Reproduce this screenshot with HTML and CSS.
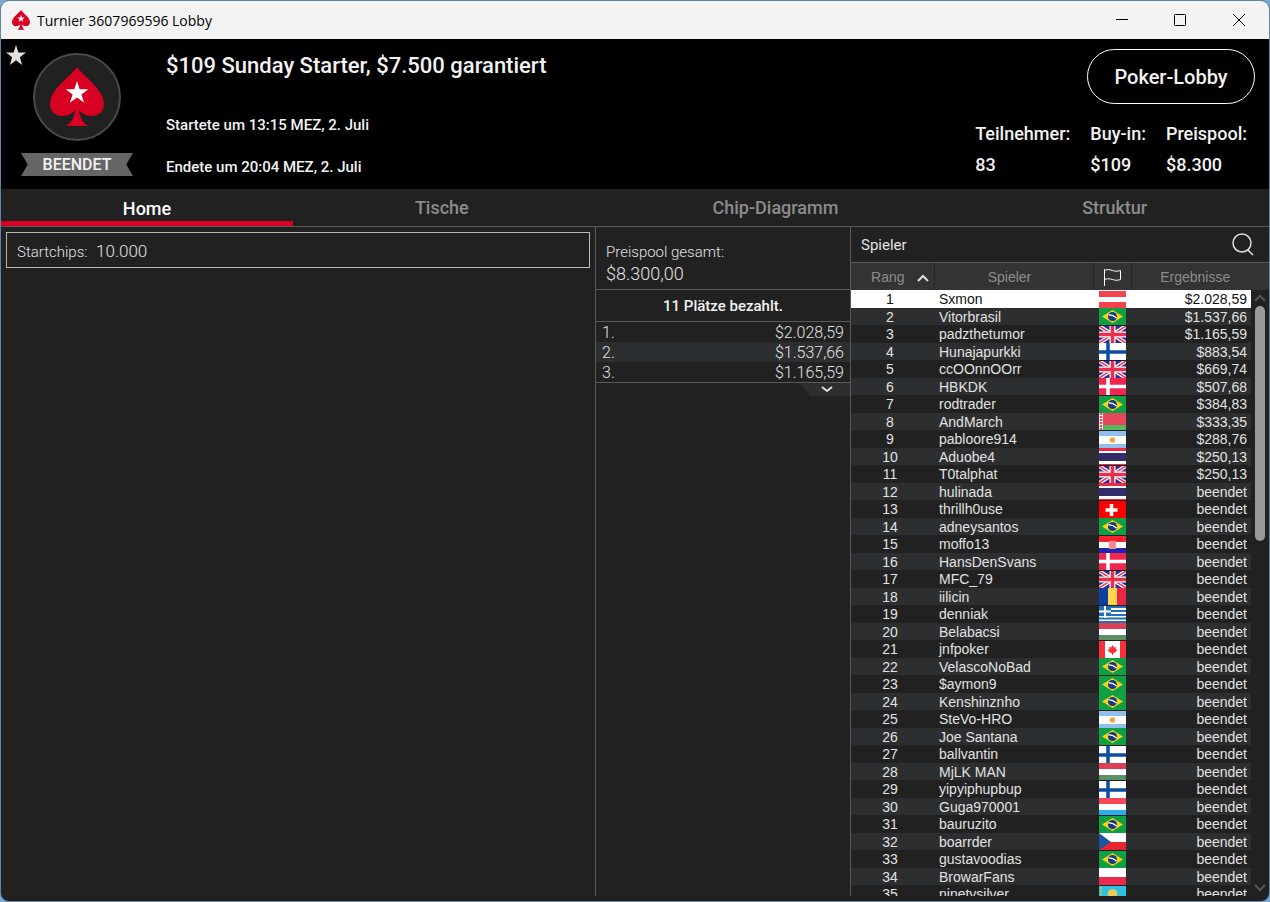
FILE: index.html
```html
<!DOCTYPE html>
<html lang="de">
  <head>
    <meta charset="UTF-8" />
    <meta name="viewport" content="width=device-width, initial-scale=1.0" />
    <title>Turnier 3607969596 Lobby</title>
    <link rel="stylesheet" href="styles.css">
  </head>
  <body>
    <svg class="defs" aria-hidden="true">
      <symbol id="spade" viewBox="0 0 54 60">
        <path fill="#d70022" d="M27 0C33 9 54 22 54 37c0 7-5 12-12 12-5 0-10-2-13-6 1 8 4 13 9 16H16c5-3 8-8 9-16-3 4-8 6-13 6C5 49 0 44 0 37 0 22 21 9 27 0z"/>
        <path fill="#fff" d="M27 14l2.700 8.300h8.700l-7 5.100 2.700 8.300-7.100-5.100-7.100 5.100 2.700-8.300-7-5.100h8.700z"/>
      </symbol>
      <symbol id="flag-at" viewBox="0 0 27 17"><path fill="#fff" d="M0 0h27v17H0z"/><path fill="#f4454f" d="M0 0h27v6H0zM0 11h27v6H0z"/></symbol>
      <symbol id="flag-br" viewBox="0 0 27 17"><path fill="#0fa045" d="M0 0h27v17H0z"/><path fill="#fbd116" d="M3 8.500L13.500 2 24 8.500 13.500 15z"/><circle cx="13.500" cy="8.500" r="4.500" fill="#123a8c"/><path d="M9.500 7q4-.5 8 3" stroke="#fff" stroke-width="1.300" fill="none"/></symbol>
      <symbol id="flag-gb" viewBox="0 0 27 17"><path fill="#2b2f9e" d="M0 0h27v17H0z"/><path d="M0 0l27 17M27 0L0 17" stroke="#fff" stroke-width="4"/><path d="M0 0l27 17M27 0L0 17" stroke="#ee3a56" stroke-width="1.500"/><path d="M13.500 0v17M0 8.500h27" stroke="#fff" stroke-width="6"/><path d="M13.500 0v17M0 8.500h27" stroke="#e8304a" stroke-width="3.500"/></symbol>
      <symbol id="flag-fi" viewBox="0 0 27 17"><path fill="#fff" d="M0 0h27v17H0z"/><path d="M9 0v17M0 9h27" stroke="#0b4da2" stroke-width="3.500"/></symbol>
      <symbol id="flag-dk" viewBox="0 0 27 17"><path fill="#f0284e" d="M0 0h27v17H0z"/><path d="M9 0v17M0 8.500h27" stroke="#fff" stroke-width="3.500"/></symbol>
      <symbol id="flag-by" viewBox="0 0 27 17"><path fill="#e8465a" d="M0 0h27v12H0z"/><path fill="#5cb860" d="M0 12h27v5H0z"/><path fill="#fff" d="M0 0h4v17H0z"/><path d="M2 0v17" stroke="#e8465a" stroke-width="2.500" stroke-dasharray="2 1"/></symbol>
      <symbol id="flag-ar" viewBox="0 0 27 17"><path fill="#fff" d="M0 0h27v17H0z"/><path fill="#8fc0ec" d="M0 0h27v5H0zM0 13h27v4H0z"/><circle cx="13.500" cy="9" r="2.700" fill="#f2a540"/></symbol>
      <symbol id="flag-th" viewBox="0 0 27 17"><path fill="#fff" d="M0 0h27v17H0z"/><path fill="#f02840" d="M0 0h27v3H0zM0 16h27v1H0z"/><path fill="#322c6b" d="M0 5h27v8H0z"/></symbol>
      <symbol id="flag-ch" viewBox="0 0 27 17"><path fill="#fe0000" d="M0 0h27v17H0z"/><path d="M12.500 3v12M6.500 9h12" stroke="#fff" stroke-width="3.500"/></symbol>
      <symbol id="flag-hr" viewBox="0 0 27 17"><path fill="#fff" d="M0 0h27v17H0z"/><path fill="#ff2030" d="M0 0h27v6H0z"/><path fill="#1f25b0" d="M0 12h27v5H0z"/><path fill="#f98a94" d="M10 5h7v8h-7z"/></symbol>
      <symbol id="flag-ro" viewBox="0 0 27 17"><path fill="#0c3f9e" d="M0 0h9v17H0z"/><path fill="#ffd54f" d="M9 0h9v17H9z"/><path fill="#ec2445" d="M18 0h9v17h-9z"/></symbol>
      <symbol id="flag-gr" viewBox="0 0 27 17"><path fill="#fff" d="M0 0h27v17H0z"/><path d="M0 1h27M0 5h27M0 9h27M0 12.500h27M0 16h27" stroke="#2270b8" stroke-width="2"/><path fill="#2270b8" d="M0 0h12v10H0z"/><path d="M6 0v12M0 5.500h12" stroke="#fff" stroke-width="2"/></symbol>
      <symbol id="flag-hu" viewBox="0 0 27 17"><path fill="#fff" d="M0 0h27v17H0z"/><path fill="#dc4055" d="M0 0h27v6H0z"/><path fill="#5c9068" d="M0 12h27v5H0z"/></symbol>
      <symbol id="flag-ca" viewBox="0 0 27 17"><path fill="#fff" d="M0 0h27v17H0z"/><path fill="#f9303a" d="M0 0h6v17H0zM21 0h6v17h-6zM13.500 4l1.500 2.500 2-.5-.5 2 2 1-3 3h-1.500v2h-1v-2h-1.500l-3-3 2-1-.5-2 2 .5z"/></symbol>
      <symbol id="flag-lu" viewBox="0 0 27 17"><path fill="#fff" d="M0 0h27v17H0z"/><path fill="#f84858" d="M0 0h27v6H0z"/><path fill="#27b0ec" d="M0 12h27v5H0z"/></symbol>
      <symbol id="flag-cz" viewBox="0 0 27 17"><path fill="#fff" d="M0 0h27v17H0z"/><path fill="#e8242c" d="M0 9h27v8H0z"/><path fill="#17579f" d="M0 0l12 9-12 8z"/></symbol>
      <symbol id="flag-pl" viewBox="0 0 27 17"><path fill="#fff" d="M0 0h27v17H0z"/><path fill="#ee2950" d="M0 9h27v8H0z"/></symbol>
      <symbol id="flag-kz" viewBox="0 0 27 17"><path fill="#2bc1e0" d="M0 0h27v17H0z"/><circle cx="13.500" cy="8" r="5" fill="#e8cc5c"/><path d="M2 1v16" stroke="#b5c860" stroke-width="2" stroke-dasharray="2 1"/></symbol>
    </svg>

    <div class="window">
      <div class="titlebar">
        <svg class="app-icon"><use href="#spade"/></svg>
        <h1>Turnier 3607969596 Lobby</h1>
        <div class="window-buttons">
          <button type="button" aria-label="Minimieren"><svg viewBox="0 0 14 14"><path d="M1 6.500h12"/></svg></button>
          <button type="button" aria-label="Maximieren"><svg viewBox="0 0 14 14"><rect x="1.500" y="1.500" width="11" height="11" rx="1"/></svg></button>
          <button type="button" aria-label="Schließen"><svg viewBox="0 0 14 14"><path d="M1 1l12 12M13 1L1 13"/></svg></button>
        </div>
      </div>

      <header class="header">
        <button type="button" class="favorite" aria-label="Favorit">
          <svg viewBox="0 0 20 20"><path d="M10 0l2.400 7.600H20l-6.100 4.700L16.200 20 10 15.300 3.800 20l2.300-7.700L0 7.600h7.600z"/></svg>
        </button>
        <div class="badge">
          <div class="logo"><svg><use href="#spade"/></svg></div>
          <div class="ribbon">BEENDET</div>
        </div>
        <div class="info">
          <h2>$109 Sunday Starter, $7.500 garantiert</h2>
          <p>Startete um 13:15 MEZ, 2. Juli</p>
          <p>Endete um 20:04 MEZ, 2. Juli</p>
        </div>
        <div class="summary">
          <button type="button" class="lobby-button">Poker-Lobby</button>
          <dl class="stats">
            <div><dt>Teilnehmer:</dt><dd>83</dd></div>
            <div><dt>Buy-in:</dt><dd>$109</dd></div>
            <div><dt>Preispool:</dt><dd>$8.300</dd></div>
          </dl>
        </div>
      </header>

      <nav class="tabs">
        <a href="#home" class="active">Home</a>
        <a href="#tische">Tische</a>
        <a href="#chips">Chip-Diagramm</a>
        <a href="#struktur">Struktur</a>
      </nav>

      <main class="content">
        <section class="home">
          <div class="startchips">Startchips: <span>10.000</span></div>
        </section>

        <section class="prizes">
          <div class="prize-total">Preispool gesamt:<span>$8.300,00</span></div>
          <h3>11 Plätze bezahlt.</h3>
          <table>
            <tr><td>1.</td><td>$2.028,59</td></tr>
            <tr><td>2.</td><td>$1.537,66</td></tr>
            <tr><td>3.</td><td>$1.165,59</td></tr>
          </table>
          <button type="button" class="expand" aria-label="Alle Plätze zeigen">
            <svg viewBox="0 0 12 7"><path d="M1 1l5 4 5-4"/></svg>
          </button>
        </section>

        <section class="players">
          <div class="players-top">
            <h3>Spieler</h3>
            <button type="button" class="search" aria-label="Spieler suchen">
              <svg viewBox="0 0 24 24"><circle cx="11" cy="10" r="9"/><path d="M17 17l5 5"/></svg>
            </button>
          </div>
          <div class="players-list">
            <div class="table-wrap">
              <table>
                <thead>
                  <tr>
                    <th class="rank">Rang <svg class="sort" viewBox="0 0 12 8"><path d="M1 7l5-5 5 5"/></svg></th>
                    <th class="name">Spieler</th>
                    <th class="flag" aria-label="Land"><svg class="flag-icon" viewBox="0 0 19 18"><path d="M1.500 1v17M1.500 2.500c3-1.500 5-1 8 0s5 1 8 0v9c-3 1-5 1-8 0s-5-1-8 0"/></svg></th>
                    <th class="result">Ergebnisse</th>
                  </tr>
                </thead>
                <tbody id="playerRows"></tbody>
              </table>
            </div>
            <div class="scrollbar">
              <div class="corner"></div>
              <svg viewBox="0 0 12 8"><path d="M1 7l5-5 5 5"/></svg>
              <div class="track"><div class="thumb"></div></div>
              <svg viewBox="0 0 12 8"><path d="M1 1l5 5 5-5"/></svg>
            </div>
          </div>
        </section>
      </main>
    </div>

    <script>
      // name, country, prize (players without a prize are simply finished)
      const players = [
        ["Sxmon", "at", "$2.028,59"],
        ["Vitorbrasil", "br", "$1.537,66"],
        ["padzthetumor", "gb", "$1.165,59"],
        ["Hunajapurkki", "fi", "$883,54"],
        ["ccOOnnOOrr", "gb", "$669,74"],
        ["HBKDK", "dk", "$507,68"],
        ["rodtrader", "br", "$384,83"],
        ["AndMarch", "by", "$333,35"],
        ["pabloore914", "ar", "$288,76"],
        ["Aduobe4", "th", "$250,13"],
        ["T0talphat", "gb", "$250,13"],
        ["hulinada", "th"],
        ["thrillh0use", "ch"],
        ["adneysantos", "br"],
        ["moffo13", "hr"],
        ["HansDenSvans", "dk"],
        ["MFC_79", "gb"],
        ["iilicin", "ro"],
        ["denniak", "gr"],
        ["Belabacsi", "hu"],
        ["jnfpoker", "ca"],
        ["VelascoNoBad", "br"],
        ["$aymon9", "br"],
        ["Kenshinznho", "br"],
        ["SteVo-HRO", "ar"],
        ["Joe Santana", "br"],
        ["ballvantin", "fi"],
        ["MjLK MAN", "hu"],
        ["yipyiphupbup", "fi"],
        ["Guga970001", "lu"],
        ["bauruzito", "br"],
        ["boarrder", "cz"],
        ["gustavoodias", "br"],
        ["BrowarFans", "pl"],
        ["ninetysilver", "kz"]
      ];

      const playerRows = document.getElementById("playerRows");

      players.forEach(([name, country, prize], index) => {
        const row = playerRows.insertRow();
        row.innerHTML = `
          <td class="rank">${index + 1}</td>
          <td class="name">${name}</td>
          <td class="flag"><svg><use href="#flag-${country}"/></svg></td>
          <td class="result">${prize || "beendet"}</td>`;
      });
      playerRows.rows[0].className = "selected";
    </script>
  </body>
</html>
```
FILE: styles.css
```css
* {
  box-sizing: border-box;
}
body {
  margin: 0;
  background-color: #76a9d8;
  color: #e2e2e2;
  font-family: Roboto, sans-serif;
}
h1, h2, h3, p, dl, dd {
  margin: 0;
}
button {
  padding: 0;
  border: none;
  background: none;
  color: inherit;
  font-family: inherit;
  cursor: pointer;
}
svg {
  display: block;
  fill: none;
}
table {
  width: 100%;
  border-collapse: collapse;
}
td, th {
  padding: 0;
}
.defs {
  position: absolute;
  width: 0;
  height: 0;
}
.window {
  display: flex;
  flex-direction: column;
  height: 100vh;
  overflow: hidden;
  border: 1px solid #5f87a5;
  border-radius: 9px;
  background-color: #212121;
}

/* title bar */
.titlebar {
  display: flex;
  align-items: center;
  flex: none;
  height: 38px;
  padding-left: 10px;
  background-color: #f3f3f3;
  color: #000;
}
.app-icon {
  width: 20px;
  height: 20px;
}
.titlebar h1 {
  margin-left: 6px;
  font: 14px "Open Sans", sans-serif;
}
.window-buttons {
  display: flex;
  margin-left: auto;
}
.window-buttons button {
  width: 58px;
  height: 38px;
}
.window-buttons button:last-child {
  width: 60px;
}
.window-buttons svg {
  width: 14px;
  height: 14px;
  margin: 0 auto;
  stroke: #000;
}

/* tournament header */
.header {
  display: flex;
  flex: none;
  height: 150px;
  background-color: #000;
  color: #f2f2f2;
  font-weight: 500;
}
.favorite {
  width: 20px;
  height: 20px;
  margin: 6px 0 0 5px;
}
.favorite svg {
  fill: #e0e0e0;
}
.badge {
  width: 112px;
  margin: 14px 0 0 -5px;
}
.logo {
  display: flex;
  justify-content: center;
  align-items: center;
  width: 88px;
  height: 88px;
  margin: 0 auto;
  border: 2px solid #4a4a4a;
  border-radius: 50%;
  background-color: #212121;
}
.logo svg {
  width: 54px;
  height: 60px;
}
.ribbon {
  margin-top: 12px;
  padding-top: 1px;
  background-color: #666;
  clip-path: polygon(0 0, 100% 0, 94% 50%, 100% 100%, 0 100%, 6% 50%);
  font-size: 16px;
  line-height: 22px;
  text-align: center;
}
.info {
  flex: 1;
  margin-left: 33px;
  font-size: 15px;
}
.info h2 {
  margin: 12px 0 33px;
  font-size: 22px;
  font-weight: 500;
  line-height: 30px;
}
.info p {
  line-height: 22px;
  margin-bottom: 20px;
}
.summary {
  padding: 10px 14px 0 0;
}
.lobby-button {
  display: block;
  width: 168px;
  height: 55px;
  margin-left: auto;
  border: 1px solid #fff;
  border-radius: 28px;
  font-size: 20px;
  font-weight: 500;
}
.stats {
  display: flex;
  gap: 20px;
  margin: 14px 8px 0 0;
  font-size: 18px;
  line-height: 31px;
}

/* tabs */
.tabs {
  display: flex;
  flex: none;
  height: 38px;
  border-bottom: 1px solid #5a5a5a;
}
.tabs a {
  flex: 1 1 auto;
  color: #8c8c8c;
  font-size: 18px;
  font-weight: 500;
  line-height: 38px;
  text-align: center;
  text-decoration: none;
}
.tabs .active {
  border-bottom: 5px solid #d70022;
  color: #fff;
  line-height: 40px;
}

.content {
  display: grid;
  grid-template-columns: 1fr 256px 418px;
  flex: 1;
  min-height: 0;
  padding-bottom: 5px;
}
.content section {
  min-height: 0;
}

/* start chips */
.home {
  padding: 5px;
}
.startchips {
  height: 36px;
  border: 1px solid #bbb;
  padding: 0 10px;
  font-size: 15px;
  font-weight: 300;
  line-height: 36px;
}
.startchips span {
  margin-left: 5px;
  font-size: 17px;
}

/* prize pool */
.prizes {
  border: solid #5a5a5a;
  border-width: 0 1px;
}
.prize-total {
  padding: 14px 10px 4px;
  font-size: 15px;
  font-weight: 300;
  line-height: 22px;
}
.prize-total span {
  display: block;
  font-size: 18px;
}
.prizes h3 {
  padding-top: 1px;
  border: solid #5a5a5a;
  border-width: 1px 0;
  color: #f2f2f2;
  font-size: 15px;
  font-weight: 500;
  line-height: 30px;
  text-align: center;
}
.prizes table {
  border-bottom: 1px solid #5a5a5a;
  font-size: 16px;
  font-weight: 300;
  line-height: 18px;
}
.prizes tr:nth-child(even) {
  background-color: #2d2e30;
}
.prizes td {
  padding: 2px 6px 0;
}
.prizes td:last-child {
  text-align: right;
}
.expand {
  display: block;
  width: 50px;
  height: 13px;
  margin-left: auto;
  padding-left: 4px;
  background-color: #2d2e30;
  clip-path: polygon(0 0, 100% 0, 100% 100%, 20% 100%);
}
.expand svg {
  width: 12px;
  height: 7px;
  margin: 0 auto;
  stroke: #ddd;
  stroke-width: 2;
}

/* players */
.players {
  display: flex;
  flex-direction: column;
}
.players-top {
  display: flex;
  justify-content: space-between;
  align-items: center;
  flex: none;
  height: 36px;
  padding: 0 14px 0 10px;
  border-bottom: 1px solid #5a5a5a;
}
.players-top h3 {
  font-size: 15px;
  font-weight: 400;
}
.search svg {
  width: 24px;
  height: 24px;
  stroke: #ddd;
  stroke-width: 1.5;
}
.players-list {
  display: flex;
  flex: 1;
  min-height: 0;
  font-family: "Liberation Sans", Arial, sans-serif;
  font-size: 14px;
}
.table-wrap {
  flex: 1;
  overflow: hidden;
}
.players table {
  table-layout: fixed;
}
.players th {
  height: 27px;
  border-right: 1px solid #252525;
  background-color: #333;
  color: #8c8c8c;
  font-weight: 400;
}
.players th:last-child {
  padding-left: 8px;
  border-right: none;
}
.players .rank {
  width: 83px;
}
.players .flag {
  width: 38px;
}
.players .result {
  width: 120px;
}
th.rank {
  padding-left: 16px;
}
th.name {
  padding-right: 8px;
}
.players .sort {
  display: inline-block;
  width: 12px;
  height: 8px;
  margin-left: 9px;
  stroke: #ddd;
  stroke-width: 2;
}
.flag-icon {
  width: 19px;
  height: 18px;
  margin: 0 auto;
  stroke: #fff;
  stroke-width: 1;
}
.players tbody {
  line-height: 17px;
}
.players tbody tr {
  height: 18px;
}
/* rows alternate 18px and 17px */
.players tbody tr:nth-child(even) {
  height: 17px;
  background-color: #2d2e30;
}
tbody tr:nth-child(even) .rank,
tbody tr:nth-child(even) .name,
tbody tr:nth-child(even) .result {
  padding-top: 1px;
  line-height: 16px;
}
.players tbody .selected {
  background-color: #fff;
  color: #111;
}
td.rank {
  padding-right: 5px;
  text-align: center;
}
td.name {
  padding-left: 5px;
}
td.flag svg {
  width: 27px;
  height: 17px;
  margin-left: 6px;
}
td.result {
  padding-right: 4px;
  text-align: right;
}
.scrollbar {
  display: flex;
  flex-direction: column;
  align-items: center;
  width: 18px;
}
.scrollbar .corner {
  flex: none;
  width: 100%;
  height: 27px;
  background-color: #333;
}
.scrollbar svg {
  flex: none;
  width: 12px;
  height: 8px;
  margin: 4px 0;
  stroke: #555;
  stroke-width: 2;
}
.scrollbar .track {
  flex: 1;
}
.scrollbar .thumb {
  width: 10px;
  height: 41%;
  border-radius: 5px;
  background-color: #999;
}
```
